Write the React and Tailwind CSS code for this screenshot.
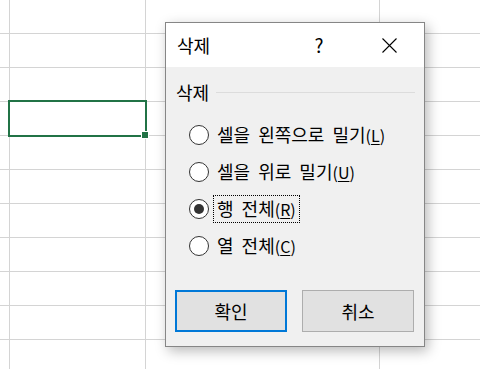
import React from 'react'

const rows = Array.from({ length: 11 })

const options = [
  { label: '셀을 왼쪽으로 밀기', key: 'L' },
  { label: '셀을 위로 밀기', key: 'U' },
  { label: '행 전체', key: 'R', checked: true },
  { label: '열 전체', key: 'C' },
]

function Radio({ checked }) {
  return (
    <span className="w-[20px] h-[20px] rounded-full border border-[#333] bg-white flex items-center justify-center shrink-0">
      {checked && <span className="w-[10px] h-[10px] rounded-full bg-[#333]" />}
    </span>
  )
}

export default function App() {
  return (
    <div className="relative w-[480px] h-[369px] overflow-hidden bg-white font-['Noto_Sans_CJK_KR','Malgun_Gothic',sans-serif] text-black">
      {/* sheet grid */}
      <div className="flex flex-col">
        {rows.map((_, i) => (
          <div key={i} className="flex h-[34px] shrink-0 border-b border-[#d4d4d4]">
            <div className="w-[10px] border-r border-[#d4d4d4]" />
            <div className="w-[136px] border-r border-[#d4d4d4]" />
            <div className="w-[234px] border-r border-[#d4d4d4]" />
            <div className="flex-1" />
          </div>
        ))}
      </div>

      {/* active cell */}
      <div className="absolute left-[8px] top-[100px] w-[139px] h-[37px] border-2 border-[#217346]" />
      <div className="absolute left-[141px] top-[131px] w-[8px] h-[8px] bg-[#217346] border border-white" />

      {/* delete dialog */}
      <div className="absolute left-[165px] top-[22px] w-[260px] h-[325px] border border-[#868686] bg-[#f0f0f0] flex flex-col shadow-[3px_4px_12px_rgba(0,0,0,0.28)]">
        <div className="h-[44px] bg-white flex items-center pl-[11px] text-[18px] shrink-0">
          <span>삭제</span>
          <span className="ml-auto w-[20px] text-center text-[19px]">?</span>
          <svg className="ml-[53px] mr-[27px]" width="15" height="15" viewBox="0 0 15 15">
            <path d="M0.5 0.5L14.5 14.5M14.5 0.5L0.5 14.5" stroke="#000" strokeWidth="1.1" fill="none" />
          </svg>
        </div>

        <div className="flex-1 flex flex-col">
          <div className="flex items-center pt-[15px] pl-[10px] pr-[9px] text-[18px] leading-[20px]">
            <span>삭제</span>
            <span className="flex-1 ml-[7px] h-px bg-[#dcdcdc]" />
          </div>

          <div className="flex flex-col mt-[14px] pl-[23px]">
            {options.map((o) => (
              <div key={o.key} className="h-[37px] flex items-center">
                <Radio checked={o.checked} />
                <span
                  className={
                    'ml-[4px] px-[3px] h-[28px] flex items-center text-[18px] border ' +
                    (o.checked ? 'border-dotted border-black' : 'border-transparent')
                  }
                >
                  <span className="whitespace-pre">{o.label.split(' ').join('  ')}</span>
                  <span className="text-[16px]">
                    (<span className="underline underline-offset-2">{o.key}</span>)
                  </span>
                </span>
              </div>
            ))}
          </div>

          <div className="mt-auto flex pl-[9px] pr-[10px] pb-[14px] gap-[15px]">
            <button className="w-[112px] h-[42px] bg-[#e1e1e1] border-2 border-[#0078d7] text-[18px]">
              확인
            </button>
            <button className="w-[112px] h-[42px] bg-[#e1e1e1] border border-[#adadad] text-[18px]">
              취소
            </button>
          </div>
        </div>
      </div>
    </div>
  )
}
